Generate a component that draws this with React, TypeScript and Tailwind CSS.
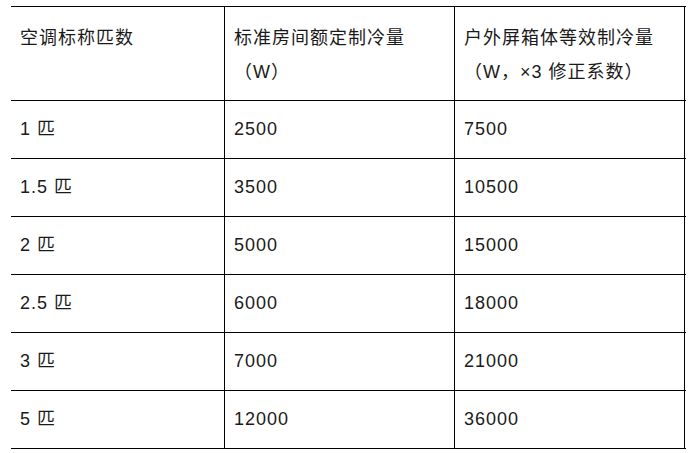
const rows = [
  ["1 匹", "2500", "7500"],
  ["1.5 匹", "3500", "10500"],
  ["2 匹", "5000", "15000"],
  ["2.5 匹", "6000", "18000"],
  ["3 匹", "7000", "21000"],
  ["5 匹", "12000", "36000"],
];

const cell = "border-r border-black pl-[9px] pr-2";

export default function App() {
  return (
    <div className="min-h-screen bg-white pt-[6px] pl-[11px] text-[18px] tracking-[1px] text-[#1a1a1a] font-['Liberation_Sans','Noto_Sans_CJK_SC',sans-serif]">
      <div className="w-[675px] border-t border-black">
        <div className="grid grid-cols-[214px_230px_230px] border-b border-black">
          <div className={`${cell} h-[93px] pt-[14px] leading-[34px]`}>空调标称匹数</div>
          <div className={`${cell} h-[93px] pt-[14px] leading-[34px]`}>
            标准房间额定制冷量
            <br />
            （W）
          </div>
          <div className={`${cell} h-[93px] pt-[14px] leading-[34px]`}>
            户外屏箱体等效制冷量
            <br />
            （W，×3 修正系数）
          </div>
        </div>
        {rows.map((r) => (
          <div key={r[0]} className="grid grid-cols-[214px_230px_230px] border-b border-black">
            {r.map((v, i) => (
              <div key={i} className={`${cell} h-[57px] flex items-center`}>
                {v}
              </div>
            ))}
          </div>
        ))}
      </div>
    </div>
  );
}
